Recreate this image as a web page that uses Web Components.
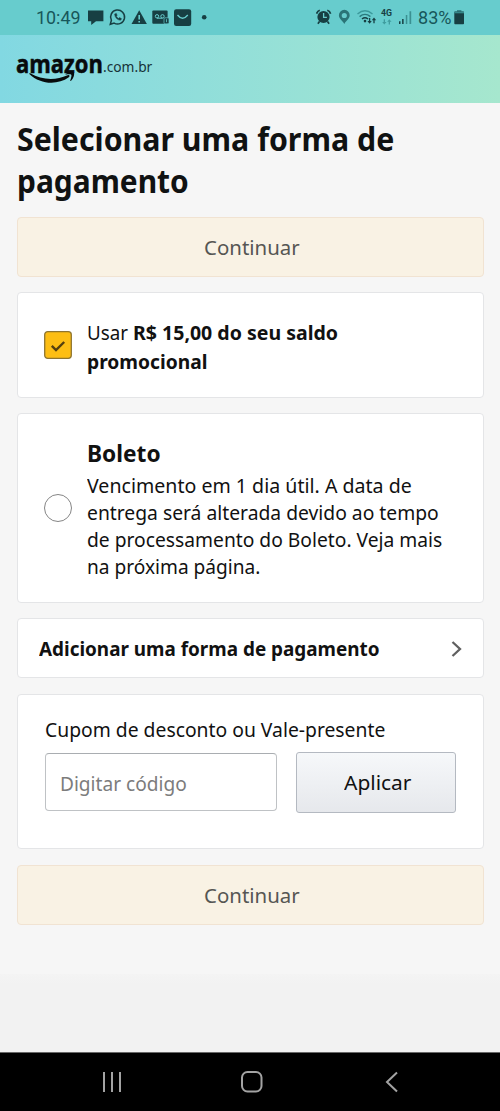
<!DOCTYPE html>
<html lang="pt-BR">
<head>
<meta charset="utf-8">
<meta name="viewport" content="width=device-width">
<title>Selecionar uma forma de pagamento</title>
<style>
html,body{margin:0;height:100%;background:#f6f6f6}
body{font-family:"Noto Sans","Open Sans",sans-serif;color:#111;overflow:hidden}
</style>
</head>
<body>
<payment-page></payment-page>
<script>
const define = (name, html, ready) => {
  const template = document.createElement('template');
  template.innerHTML = html;
  customElements.define(name, class extends HTMLElement {
    constructor() {
      super();
      this.attachShadow({mode: 'open'}).append(template.content.cloneNode(true));
    }
    connectedCallback() { if (ready) ready(this, this.shadowRoot); }
  });
};

// One line of text condensed or widened to the width given in its "w" attribute.
define('fit-line', `
<style>
:host{display:block;white-space:nowrap}
span{display:inline-block;transform-origin:0 50%;vertical-align:top}
</style><span><slot></slot></span>`, (host, root) => {
  const span = root.querySelector('span');
  const w = +host.getAttribute('w');
  host.style.width = w + 'px';
  span.style.transform = `scaleX(${w / span.offsetWidth})`;
});

define('status-bar', `
<style>
:host{display:flex;box-sizing:border-box;height:35px;background:#67cccd;color:#17575a;align-items:center;padding:0 35px 0 36px;font:17.5px/36px Roboto,sans-serif}
svg{display:block;flex:none}
.gap{flex:1}
</style>
<fit-line w="45">10:49</fit-line>
<svg width="135" height="35" viewBox="81 0 135 35" fill="#173f43">
<path d="M88 10.5h15.4v10.8H96L91.2 25v-3.7H88z"/>
<g fill="none" stroke="#173f43"><path d="M110.3 24.3l1.1-4a7 7 0 1 1 2.7 2.8z" stroke-width="1.5"/><path d="M114.6 14.1c.3 3.4 2.5 5.8 5.8 6.2l1.2-1.5-2-1.2-1 .9q-1.6-.8-2.3-2.3l.8-.9-.8-1.9z" fill="#173f43" stroke-width=".5"/></g>
<path d="M139.2 10.2l7.7 13.8h-15.4z"/><path d="M139.2 15v4.6M139.2 21v1.5" stroke="#67cccd" stroke-width="1.6"/>
<rect x="152.3" y="10.6" width="15.3" height="13.2" rx="1"/><g fill="none" stroke="#67cccd"><circle cx="157" cy="16.3" r="1.7"/><circle cx="162.5" cy="16.3" r="1.7"/><path d="M157 18.2h5.5"/></g><rect x="164" y="17.8" width="5" height="6" rx="1" stroke="#67cccd" stroke-width=".7"/><path d="M166.5 19.2v3" stroke="#67cccd" stroke-width=".8"/>
<rect x="174" y="9.2" width="17.2" height="16.8" rx="2.2"/><path d="M177.5 15q5 6.5 10.3 0" fill="none" stroke="#67cccd" stroke-width="1.3"/>
<circle cx="204.2" cy="17.3" r="2.3"/>
</svg>
<div class="gap"></div>
<svg width="102" height="35" viewBox="316 0 102 35" fill="#173f43">
<circle cx="323.5" cy="17" r="6.1"/><path d="M323.6 13v4.4h3.3" fill="none" stroke="#67cccd" stroke-width="1.3"/><path d="M316.6 13.7q.8-2.5 3.2-3.4M327.3 10.3q2.6.9 3.3 3.4M319.5 21.5l-1.6 2.3M327.5 21.5l1.6 2.3" fill="none" stroke="#173f43" stroke-width="1.7"/>
<path d="M344.3 9.8a5.5 5.5 0 0 1 5.4 5.5c0 3.2-3.2 5-5.4 8.6-2.2-3.6-5.4-5.4-5.4-8.6a5.5 5.5 0 0 1 5.4-5.5zm0 3.1a2.6 2.6 0 1 0 0 5.2 2.6 2.6 0 0 0 0-5.2z" fill="#2a7477" fill-rule="evenodd"/>
<g fill="none"><path d="M357.5 14q7.5-6.3 15 0" stroke="#3b999b" stroke-width="1.4"/><path d="M359.6 16.6q5.4-4.5 10.8 0" stroke="#297a7d" stroke-width="1.4"/><path d="M362 19q3-2.4 6 0" stroke="#173f43" stroke-width="1.5"/><path d="M369.6 18v4.3M374 23.2v-4.1" stroke="#173f43" stroke-width="1.3"/></g><circle cx="365" cy="21.1" r="1.3"/><path d="M367.4 21h4.4l-2.2 2.7zM371.8 20.3h4.4L374 17.6z"/>
<text x="381" y="16.3" font-family="Roboto" font-weight="700" font-size="8.5" textLength="11" lengthAdjust="spacingAndGlyphs">4G</text>
<g fill="#3f9c9e"><path d="M383.7 19.2h1.3v2.8h1.5l-2.2 2.6-2.1-2.6h1.5zM388.7 24.6h1.3v-2.8h1.5l-2.2-2.6-2.1 2.6h1.5z"/></g>
<path d="M399 21.3h1.5V24H399zM402.1 19h1.5v5h-1.5z"/><path d="M405.8 15h1.5v9h-1.5zM409.5 11.3h1.7V24h-1.7z" fill="#3b9092"/>
</svg>
<fit-line w="34">83%</fit-line>
<svg width="13" height="35" viewBox="452 0 13 35"><path d="M457 10h4.4v2.5H457z" fill="#35898b"/><rect x="454.3" y="11.6" width="9.7" height="12.7" rx=".8" fill="#173f43"/><path d="M454.3 11.6h9.7v1.7h-9.7z" fill="#35898b"/></svg>`);

define('brand-header', `
<style>
:host{display:flex;height:68px;background:linear-gradient(90deg,#82d8e2,#a6e7ce);position:relative;color:#080b0c;padding-left:16px;box-sizing:border-box}
.name{font:700 25px/34px "Open Sans","Noto Sans",sans-serif;-webkit-text-stroke:.5px #080b0c;margin-top:11px}
.tld{font:15px/20px "Noto Sans",sans-serif;margin-top:21px;color:#173238}
svg{position:absolute;left:28px;top:35px}
</style>
<fit-line class="name" w="87">amazon</fit-line><fit-line class="tld" w="49.5">.com.br</fit-line>
<svg width="50" height="16" viewBox="28 70 50 16" fill="#080b0c"><path d="M30.2 73.3c11.5 6.7 25 7.6 37.4 2 1.7-.8 2.7.8 1.2 2C57.3 85.6 40 84.2 29.6 74.2c-.7-.7-.2-1.3.6-.9z"/><path d="M65.6 74c2.4-2 7.6-2.2 8.3-1.3.8 1-.3 6-2.8 8-.6.5-1.1.2-.8-.5.7-1.8 1.6-4.8 1-5.5-.7-.8-3.5-.4-5.2-.2-.6.1-.9-.2-.5-.5z"/></svg>`);

define('continue-button', `
<style>
:host{display:block}
button{display:flex;width:100%;height:60px;box-sizing:border-box;align-items:center;justify-content:center;border:1px solid #f1e3d2;border-radius:4px;background:#f9f2e4;color:#565653;font:20px/30px "Noto Sans",sans-serif;padding:1px 0 0;margin:0}
</style><button disabled><fit-line w="96"><slot></slot></fit-line></button>`);

define('ui-card', `
<style>
:host{display:flex;box-sizing:border-box;background:#fff;border:1px solid #e4e5e7;border-radius:4px;font-size:20px;line-height:27px}
</style><slot></slot>`);

define('check-box', `
<style>:host{display:block;width:28px;height:28px;flex:none}svg{display:block}</style>
<svg width="28" height="28"><rect x=".7" y=".7" width="26.6" height="26.6" rx="3" fill="#fdbe14" stroke="#8f7530" stroke-width="1.3"/><path d="M7.8 14.9l4.2 4.1 8.2-8" fill="none" stroke="#55400f" stroke-width="2.4"/></svg>`);

define('radio-button', `
<style>:host{display:block;box-sizing:border-box;width:28px;height:28px;flex:none;border:1.4px solid #858585;border-radius:50%;background:#fff}</style>`);

define('coupon-form', `
<style>
:host{display:block;padding:21px 27px 0}
.row{display:flex;align-items:center;justify-content:space-between;margin-top:9px}
.field{display:flex;align-items:center;box-sizing:border-box;width:232px;height:58px;margin-top:-1px;border:1.5px solid #bfc2c5;border-top-color:#a9adb1;border-radius:4px;padding:3px 0 0 14px;color:#7c7c7c;background:#fff}
button{display:flex;align-items:center;justify-content:center;width:160px;height:61px;box-sizing:border-box;border:1.5px solid #b4b9c1;border-radius:3px;background:linear-gradient(#f6f8fa,#e6e8ec);color:#111;font:20px/27px "Noto Sans",sans-serif;padding:0;margin:0}
</style>
<fit-line w="340">Cupom de desconto ou Vale-presente</fit-line>
<div class="row"><div class="field"><fit-line w="127">Digitar código</fit-line></div><button><fit-line w="67">Aplicar</fit-line></button></div>`);

define('nav-bar', `
<style>
:host{display:grid;grid-template-columns:repeat(3,140px);justify-content:center;height:59px;background:#000;align-items:center;justify-items:center;padding-left:3px;box-sizing:border-box;border-top:1px solid #686868}
svg{display:block;fill:none;stroke:#a3a3a3;stroke-width:2}
</style>
<svg width="22" height="22"><path d="M3 1v20M11 1v20M19 1v20"/></svg>
<svg width="24" height="24"><rect x="2" y="2" width="19.5" height="19.5" rx="5.5"/></svg>
<svg width="22" height="22"><path d="M16 1.5L6 11l10 9.5"/></svg>`);

define('payment-page', `
<style>
:host{display:flex;flex-direction:column;height:1111px;width:500px;background:#f6f6f6}
main{flex:none;height:871px;box-sizing:border-box;padding:15px 16px 0 17px;display:flex;flex-direction:column}
h1{margin:0 0 15px;font-size:32px;line-height:42px;color:#101212}
b{font-weight:700}
.promo{height:106px;margin-top:15px;padding:26px 26px 24px;align-items:center}
.promo check-box{margin-top:-2px}
.promo .text{line-height:29px;margin:1px 0 0 15px}
.line{display:flex}
.boleto{height:190px;margin-top:15px;padding:0 26px;align-items:center}
.boleto .text{margin:2px 0 0 15px}
h2{margin:0 0 4px;font-size:23px;line-height:30px}
.add{height:60px;margin-top:15px;padding:1px 19px 0 21px;align-items:center;justify-content:space-between;font-weight:700}
.coupon{height:155px;margin-top:16px;display:block}
.last{margin-top:16px}
footer{flex:1;background:linear-gradient(#f4f4f4,#f2f2f2 10px)}
.chev{display:block}
</style>
<status-bar></status-bar>
<brand-header></brand-header>
<main>
<h1><fit-line w="377">Selecionar uma forma de</fit-line><fit-line w="172">pagamento</fit-line></h1>
<continue-button>Continuar</continue-button>
<ui-card class="promo"><check-box></check-box><div class="text"><div class="line"><fit-line w="46">Usar&nbsp;</fit-line><b><fit-line w="205">R$ 15,00 do seu saldo</fit-line></b></div><b><fit-line w="120">promocional</fit-line></b></div></ui-card>
<ui-card class="boleto"><radio-button></radio-button><div class="text"><h2><fit-line w="74">Boleto</fit-line></h2><fit-line w="325">Vencimento em 1 dia útil. A data de</fit-line><fit-line w="352">entrega será alterada devido ao tempo</fit-line><fit-line w="355">de processamento do Boleto. Veja mais</fit-line><fit-line w="173">na próxima página.</fit-line></div></ui-card>
<ui-card class="add"><fit-line w="341">Adicionar uma forma de pagamento</fit-line><svg class="chev" width="14" height="18"><path d="M2.5 2l7.5 7-7.5 7" fill="none" stroke="#606060" stroke-width="2.3"/></svg></ui-card>
<ui-card class="coupon"><coupon-form></coupon-form></ui-card>
<continue-button class="last">Continuar</continue-button>
</main>
<footer></footer>
<nav-bar></nav-bar>`);
</script>
</body>
</html>
